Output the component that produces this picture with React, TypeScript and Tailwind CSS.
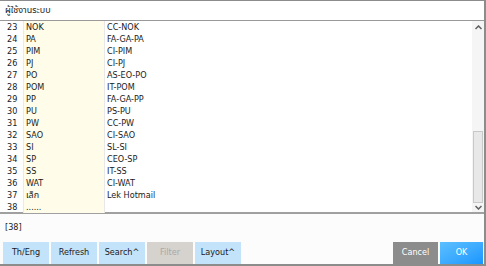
const rows: [string, string, string][] = [
  ["23", "NOK", "CC-NOK"],
  ["24", "PA", "FA-GA-PA"],
  ["25", "PIM", "CI-PIM"],
  ["26", "PJ", "CI-PJ"],
  ["27", "PO", "AS-EO-PO"],
  ["28", "POM", "IT-POM"],
  ["29", "PP", "FA-GA-PP"],
  ["30", "PU", "PS-PU"],
  ["31", "PW", "CC-PW"],
  ["32", "SAO", "CI-SAO"],
  ["33", "SI", "SL-SI"],
  ["34", "SP", "CEO-SP"],
  ["35", "SS", "IT-SS"],
  ["36", "WAT", "CI-WAT"],
  ["37", "เล็ก", "Lek Hotmail"],
  ["38", "......", ""],
];

function Btn({ label, className }: { label: string; className: string }) {
  return (
    <div className={`h-[22px] flex items-center justify-center text-[9px] ${className}`}>{label}</div>
  );
}

export default function App() {
  return (
    <div
      className="w-[486px] h-[266px] bg-white flex flex-col border-t border-r-2 border-b-2 border-[#8c8c8c] text-[#1a1a1a] overflow-hidden"
      style={{ fontFamily: "Tahoma, 'DejaVu Sans Condensed', 'Noto Sans Thai', 'Noto Sans', sans-serif" }}
    >
      <div className="h-[20px] flex items-center px-[5px] text-[9px] border-b border-[#9a9a9a]">ผู้ใช้งานระบบ</div>

      <div className="flex h-[193px] border-b-2 border-[#a0a0a0]">
        <div className="flex-1 flex flex-col">
          {rows.map(([n, code, name]) => (
            <div key={n} className="flex h-[12px] text-[9px] leading-[12px]">
              <div className="w-[23px] pl-[7px]">{n}</div>
              <div className="w-[81px] bg-[#fffde9] border-l border-[#ecebe0] pl-[2px]">{code}</div>
              <div className="flex-1 border-l border-[#e8e8e8] pl-[2px]">{name}</div>
            </div>
          ))}
        </div>
        <div className="w-[12px] bg-[#f5f5f5] flex flex-col items-center">
          <div className="h-[14px] flex items-center justify-center">
            <svg width="7" height="5" viewBox="0 0 7 5"><path d="M0.5 4 L3.5 1 L6.5 4" stroke="#606060" strokeWidth="1.5" fill="none" /></svg>
          </div>
          <div className="flex-1 w-full flex flex-col">
            <div className="h-[97px]" />
            <div className="h-[72px] mx-[1px] bg-[#e8e8e8] border border-[#c8c8c8]" />
          </div>
          <div className="h-[10px] flex items-center justify-center">
            <svg width="7" height="5" viewBox="0 0 7 5"><path d="M0.5 1 L3.5 4 L6.5 1" stroke="#606060" strokeWidth="1.5" fill="none" /></svg>
          </div>
        </div>
      </div>

      <div className="h-[27px] bg-[#fcfcfc] flex items-center px-[5px] text-[9px]">[38]</div>

      <div className="flex-1 bg-[#fcfcfc] flex items-start pt-[1px] pl-[3px] pr-[1px] gap-[2px]">
        <Btn label="Th/Eng" className="w-[46px] bg-[#c3e3fb]" />
        <Btn label="Refresh" className="w-[46px] bg-[#c3e3fb]" />
        <Btn label="Search^" className="w-[46px] bg-[#c3e3fb]" />
        <Btn label="Filter" className="w-[46px] bg-[#d6d3ce] text-[#a8a8a8]" />
        <Btn label="Layout^" className="w-[46px] bg-[#c3e3fb]" />
        <div className="flex-1" />
        <Btn label="Cancel" className="w-[45px] bg-[#8c8c8c] text-white" />
        <Btn label="OK" className="w-[43px] bg-gradient-to-br from-[#5cc0ff] to-[#1596ff] text-white" />
      </div>
    </div>
  );
}
